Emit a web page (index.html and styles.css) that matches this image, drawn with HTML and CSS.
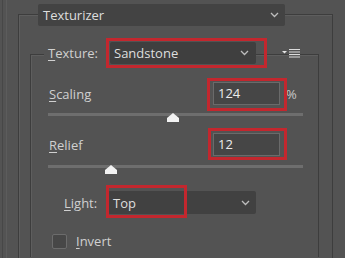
FILE: index.html
```html
<!DOCTYPE html>
<html>
<head>
<meta charset="utf-8">
<link rel="stylesheet" href="styles.css">
</head>
<body>
<div class="page">
  <div class="rail-a"></div>
  <div class="rail-b"></div>
  <div class="outer">
    <div class="outer-head">
      <div class="dd dd-main">
        <span>Texturizer</span>
        <svg class="chev" width="9" height="6" viewBox="0 0 9 6"><polyline points="1,1 4.5,4.5 8,1" fill="none" stroke="#bdbdbd" stroke-width="1.3"/></svg>
      </div>
    </div>
    <div class="inner">
      <div class="inner-head">
        <span class="legend"><u>T</u>exture:</span>
        <div class="dd dd-texture">
          <span>Sandstone</span>
          <svg class="chev" width="9" height="6" viewBox="0 0 9 6"><polyline points="1,1 4.5,4.5 8,1" fill="none" stroke="#bdbdbd" stroke-width="1.3"/></svg>
        </div>
        <svg class="menu" width="19" height="9" viewBox="0 0 19 9">
          <polygon points="0,2 5,2 2.5,4.5" fill="#e6e6e6"/>
          <rect x="7" y="0" width="11" height="1" fill="#dcdcdc"/>
          <rect x="7" y="2.5" width="11" height="1" fill="#dcdcdc"/>
          <rect x="7" y="5" width="11" height="1" fill="#dcdcdc"/>
          <rect x="7" y="7.5" width="11" height="1" fill="#dcdcdc"/>
        </svg>
      </div>
      <div class="body">
        <div class="row row-scaling">
          <span class="label"><u>S</u>caling</span>
          <div class="field">124</div>
          <span class="unit">%</span>
        </div>
        <div class="slider slider-scaling">
          <div class="track"></div>
          <svg class="thumb" style="left:119px" width="12" height="9" viewBox="0 0 12 9"><polygon points="6,0 12,5 12,9 0,9 0,5" fill="#f2f2f2"/></svg>
        </div>
        <div class="row row-relief">
          <span class="label"><u>R</u>elief</span>
          <div class="field">12</div>
        </div>
        <div class="slider slider-relief">
          <div class="track"></div>
          <svg class="thumb" style="left:57px" width="12" height="9" viewBox="0 0 12 9"><polygon points="6,0 12,5 12,9 0,9 0,5" fill="#f2f2f2"/></svg>
        </div>
        <div class="row row-light">
          <span class="light-label"><u>L</u>ight:</span>
          <div class="dd dd-light">
            <span>Top</span>
            <svg class="chev" width="9" height="6" viewBox="0 0 9 6"><polyline points="1,1 4.5,4.5 8,1" fill="none" stroke="#bdbdbd" stroke-width="1.3"/></svg>
          </div>
        </div>
        <div class="row row-invert">
          <span class="check"></span>
          <span class="check-label"><u>I</u>nvert</span>
        </div>
      </div>
    </div>
  </div>
</div>
<div class="mark mark-texture"></div>
<div class="mark mark-scaling"></div>
<div class="mark mark-relief"></div>
<div class="mark mark-light"></div>
</body>
</html>
```
FILE: styles.css
```css
html, body {
  margin: 0;
  padding: 0;
}
body {
  width: 345px;
  height: 258px;
  overflow: hidden;
  background: #535353;
  font-family: "Open Sans", "Noto Sans", sans-serif;
  font-size: 13px;
  color: #d4d4d4;
  position: relative;
}
u {
  text-decoration-thickness: 1px;
  text-underline-offset: 2px;
}
.page {
  display: flex;
  height: 258px;
  overflow: hidden;
}
.rail-a {
  width: 1px;
  margin-left: 2px;
  background: #474747;
}
.rail-b {
  width: 1px;
  margin-left: 3px;
  background: #5c5c5c;
}
.outer {
  margin-left: 11px;
  margin-top: 14px;
  width: 315px;
  height: 244px;
  box-sizing: border-box;
  border: 1px solid #3d3d3d;
  border-bottom: none;
  box-shadow: 1px 1px 0 #5e5e5e inset;
}
.outer-head {
  display: flex;
  margin-top: -11px;
  padding-left: 19px;
}
.dd {
  display: flex;
  align-items: center;
  justify-content: space-between;
  box-sizing: border-box;
  height: 22px;
  background: #414141;
  border-radius: 2px;
  color: #dedede;
  padding: 0 6px 0 5px;
}
.dd-main {
  width: 247px;
  padding-left: 5px;
  background: #434343;
}
.inner {
  margin-left: 11px;
  margin-top: 28px;
  width: 289px;
  height: 203px;
  box-sizing: border-box;
  border: 1px solid #3d3d3d;
  border-bottom: none;
  box-shadow: 1px 1px 0 #5e5e5e inset;
}
.inner-head {
  display: flex;
  align-items: center;
  margin-top: -13px;
  padding-left: 13px;
}
.legend {
  box-sizing: border-box;
  width: 66px;
  background: #535353;
  padding: 0 0 0 4px;
  line-height: 22px;
  color: #d0d0d0;
}
.dd-texture {
  width: 146px;
  background: #3f3f3f;
  padding-left: 4px;
  padding-right: 7px;
}
.menu {
  margin-left: 26px;
}
.body {
  padding-left: 18px;
}
.row {
  display: flex;
  align-items: center;
}
.row-scaling {
  margin-top: 18px;
}
.label {
  width: 164px;
  color: #d0d0d0;
}
.field {
  box-sizing: border-box;
  width: 67px;
  height: 23px;
  background: #464646;
  border: 1px solid #6a6a6a;
  padding-left: 4px;
  line-height: 21px;
  color: #ececec;
}
.unit {
  margin-left: 6px;
  color: #c8c8c8;
}
.slider {
  position: relative;
  width: 255px;
  height: 9px;
}
.slider-scaling {
  margin-top: 8px;
  margin-left: -1px;
}
.slider-relief {
  margin-top: 9px;
  margin-left: -1px;
}
.track {
  margin-top: 3px;
  height: 3px;
  background: #6e6e6e;
}
.thumb {
  position: absolute;
  top: 0;
}
.row-relief {
  margin-top: 11px;
}
.row-light {
  margin-top: 17px;
  padding-left: 15px;
}
.light-label {
  width: 44px;
  color: #d0d0d0;
}
.dd-light {
  width: 148px;
  height: 23px;
  background: #414141;
  padding-left: 5px;
}
.row-invert {
  margin-top: 18px;
  padding-left: 3px;
}
.check {
  box-sizing: border-box;
  width: 15px;
  height: 15px;
  border: 1px solid #6c6c6c;
  border-radius: 2px;
  background: #474747;
}
.check-label {
  margin-left: 9px;
  color: #d0d0d0;
}
.mark {
  position: absolute;
  box-sizing: border-box;
  border: 3px solid #c3272e;
}
.mark-texture {
  left: 106px;
  top: 38px;
  width: 161px;
  height: 30px;
}
.mark-scaling {
  left: 207px;
  top: 78px;
  width: 80px;
  height: 33px;
}
.mark-relief {
  left: 208px;
  top: 128px;
  width: 79px;
  height: 32px;
}
.mark-light {
  left: 106px;
  top: 185px;
  width: 81px;
  height: 33px;
}
```
